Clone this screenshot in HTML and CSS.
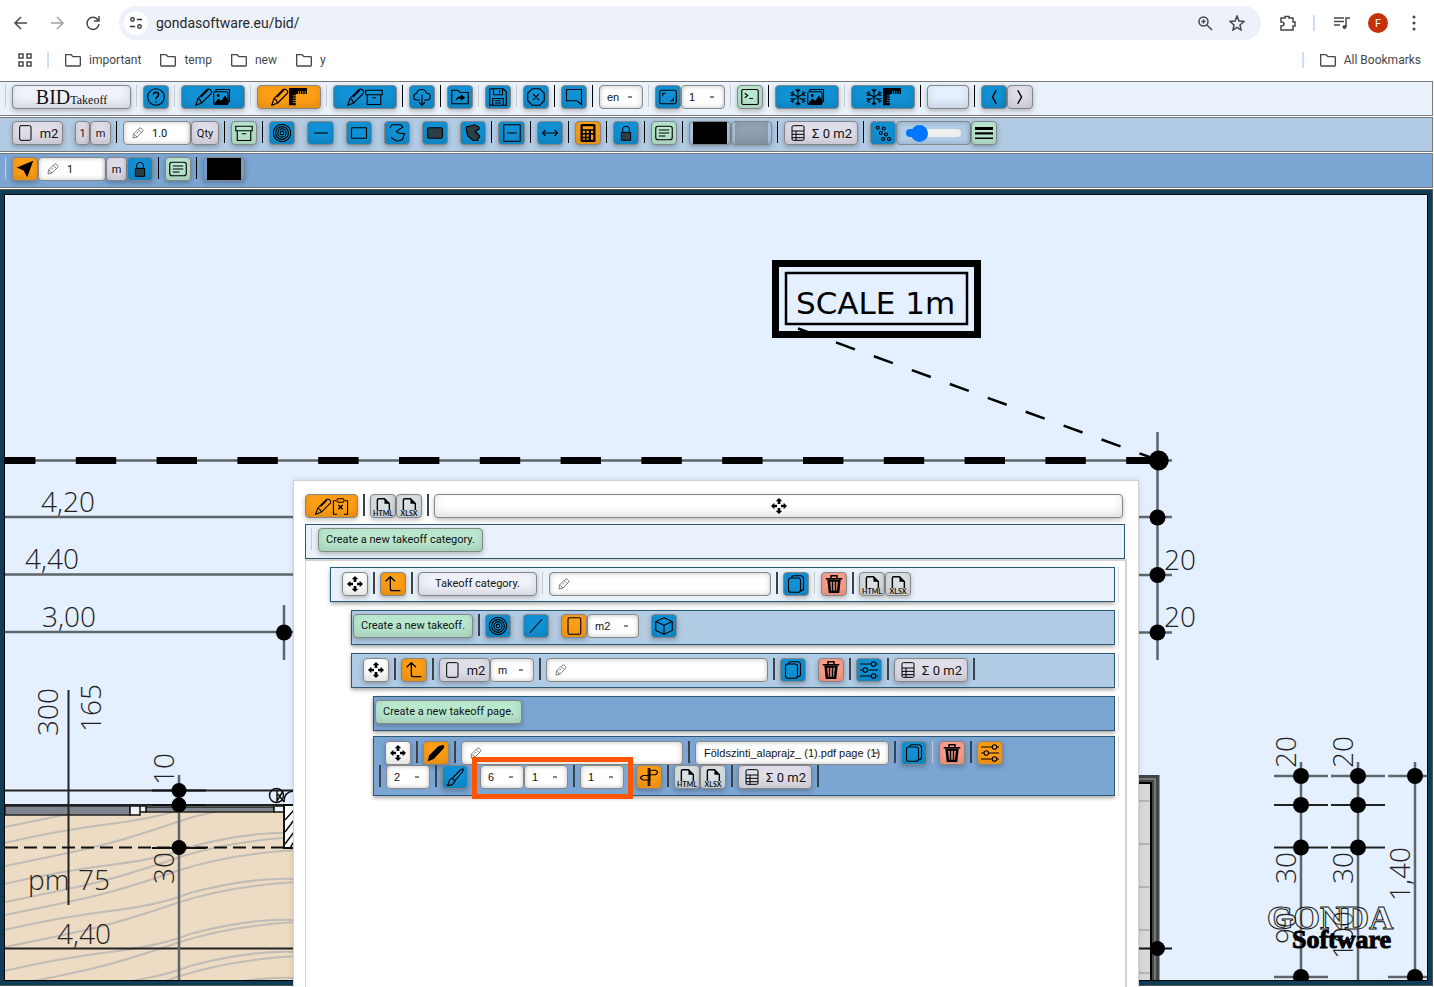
FILE: index.html
```html
<!DOCTYPE html>
<html lang="en">
<head>
<meta charset="utf-8">
<title>BID Takeoff</title>
<link rel="stylesheet" href="styles.css">
</head>
<body>
<svg class="sprite" aria-hidden="true">
  <symbol id="pen" viewBox="0 0 24 24"><path d="M1 23l3-9L16 2q2-1 4 0l2 2q1 2-1 4L9 20zM8 12l9-9M4 14q3 1 5 6"/></symbol>
  <symbol id="image" viewBox="0 0 24 24"><path d="M4 5V2h18v16h-2"/><rect x="1" y="5" width="19" height="17" rx="2"/><path class="solid" d="M2 20l5-6 4 3 5-7 4 6v6H2z"/><circle class="solid" cx="7" cy="10" r="2"/></symbol>
  <symbol id="ruler" viewBox="0 0 24 24"><path class="solid" d="M0 0h24v8h-2V4h-1v4h-2V4h-1v4h-2V4h-1v4h-2V4h-1v4H9v2H5v1h4v2H5v1h4v2H5v1h4v2H5v1h4v3H0z"/></symbol>
  <symbol id="archive" viewBox="0 0 24 24"><path d="M1 3h22v6H1zM3 9v13h18V9M9 13h6"/></symbol>
  <symbol id="help" viewBox="0 0 24 24"><circle cx="12" cy="12" r="11"/><path class="bold" d="M8.500 9q0-3.500 3.500-3.500t3.500 3.200q0 2-2 3.200-1.500 1-1.500 3M12 17.500v1.500"/></symbol>
  <symbol id="cloud" viewBox="0 0 24 24"><path d="M9 16H6q-5 0-5-4.500Q1 8 5 7q1-5 6.500-5T18 7q5 0 5 4.500T18 16h-3M12 9v14M8 19l4 4 4-4"/></symbol>
  <symbol id="share" viewBox="0 0 24 24"><path d="M1 21V3h8l3 3h11v15z"/><path class="solid" d="M6 17q1-6 7-6V8l6 5-6 4v-3q-4 0-7 3z"/></symbol>
  <symbol id="save" viewBox="0 0 24 24"><path d="M1 1h18l4 4v18H1zM6 1v8h12V1M14 3v4M5 23v-9h14v9M8 17h8M8 20h8"/></symbol>
  <symbol id="close" viewBox="0 0 24 24"><path d="M7 1h10l6 6v10l-6 6H7l-6-6V7zM8 8l8 8M16 8l-8 8"/></symbol>
  <symbol id="comment" viewBox="0 0 24 24"><path d="M22 22V2H2v15h14z"/></symbol>
  <symbol id="full" viewBox="0 0 24 24"><rect x="1" y="3" width="22" height="18" rx="2"/><path d="M5 11V7h4M19 13v4h-4"/></symbol>
  <symbol id="term" viewBox="0 0 24 24"><rect x="1" y="2" width="22" height="20" rx="2"/><path d="M5 7l4 3-4 3M11 14h5"/></symbol>
  <symbol id="snow" viewBox="0 0 24 24"><path d="M12 1v22M2 6l20 12M22 6L2 18M9 2l3 3 3-3M9 22l3-3 3 3M2 10l4-1-1-5M22 14l-4 1 1 5M22 10l-4-1 1-5M2 14l4 1-1 5"/></symbol>
  <symbol id="lt" viewBox="0 0 24 24"><path class="bold" d="M15 3l-5 9 5 9"/></symbol>
  <symbol id="gt" viewBox="0 0 24 24"><path class="bold" d="M9 3l5 9-5 9"/></symbol>
  <symbol id="page" viewBox="0 0 24 24"><rect x="4" y="1" width="17" height="22" rx="2"/></symbol>
  <symbol id="pencil" viewBox="0 0 24 24"><path d="M2 22l1-8L14 3q2-2 4-1l3 3q2 2 0 4L10 20zM3 14l7 6M12 5l7 6M9 13l3-3"/></symbol>
  <symbol id="target" viewBox="0 0 24 24"><circle cx="12" cy="12" r="11.500"/><circle cx="12" cy="12" r="8.500"/><circle cx="12" cy="12" r="5.500"/><circle cx="12" cy="12" r="2.500"/></symbol>
  <symbol id="line" viewBox="0 0 24 24"><path d="M3 12h18"/></symbol>
  <symbol id="rect" viewBox="0 0 24 24"><rect x="2" y="5" width="20" height="14" rx="1"/></symbol>
  <symbol id="rectfill" viewBox="0 0 24 24"><rect class="slate" x="2" y="5" width="20" height="14" rx="2"/></symbol>
  <symbol id="poly" viewBox="0 0 24 24"><path d="M5 1h12l3 3-9 6 3 2 8 1-3 8-7 2-8-5"/><path d="M5 1l-2 4"/></symbol>
  <symbol id="polyfill" viewBox="0 0 24 24"><path class="slate" d="M3 4l11-3 6 3v3l-5 3 2 2 4 4-3 6h-6l-7-6-2-8z"/></symbol>
  <symbol id="minus" viewBox="0 0 24 24"><rect x="1" y="1" width="22" height="22" rx="1"/><path d="M6 12h12"/></symbol>
  <symbol id="width" viewBox="0 0 24 24"><path d="M2 12h20M6 8l-4 4 4 4M18 8l4 4-4 4"/></symbol>
  <symbol id="calc" viewBox="0 0 24 24"><path class="solid" fill-rule="evenodd" d="M4 0h16q2 0 2 2v20q0 2-2 2H4q-2 0-2-2V2q0-2 2-2zM5 3v4h14V3zM5 9v3h3V9zM10 9v3h3V9zM16 9v3h3V9zM5 14v3h3v-3zM10 14v3h3v-3zM16 14v7h3v-7zM5 19v2h3v-2zM10 19v2h3v-2z"/></symbol>
  <symbol id="lock" viewBox="0 0 24 24"><path class="slate" d="M5 11h14v12H5z"/><path d="M7 11V6q0-4 5-4t5 4v5"/></symbol>
  <symbol id="card" viewBox="0 0 24 24"><rect x="1" y="3" width="22" height="18" rx="3"/><path d="M5 8h14M5 12h14M5 16h9"/></symbol>
  <symbol id="sheet" viewBox="0 0 24 24"><path d="M5 1h14q2 0 2 2v18q0 2-2 2H5q-2 0-2-2V3q0-2 2-2zM3 9h18M3 14h18M3 19h18M9 9v14"/></symbol>
  <symbol id="bubbles" viewBox="0 0 24 24"><circle cx="5" cy="5" r="2"/><circle cx="13" cy="6" r="2"/><circle cx="9" cy="12" r="2"/><circle cx="16" cy="14" r="2"/><circle cx="12" cy="20" r="2"/><circle cx="20" cy="20" r="2"/></symbol>
  <symbol id="bars" viewBox="0 0 24 24"><path class="solid" d="M0 4h24v4H0zM0 11h24v3H0zM0 18h24v2H0z"/></symbol>
  <symbol id="nav" viewBox="0 0 24 24"><path class="solid" d="M23 1L15 23l-5-9-9-4z"/></symbol>
  <symbol id="clip" viewBox="0 0 24 24"><path d="M6 4H2v19h5M17 23h5V4h-4"/><path class="bold" d="M9 16l6-6M9 10l6 6"/><rect x="7" y="1" width="10" height="5" rx="2"/></symbol>
  <symbol id="doc" viewBox="0 0 24 17"><path class="bold" d="M4 17V3q0-2 2-2h8l7 7v9"/><path class="solid" d="M14 0l8 8h-8z"/></symbol>
  <symbol id="move" viewBox="0 0 24 24"><path class="solid" d="M12 0l5 5h-3v4h-4V5H7zM12 24l5-5h-3v-4h-4v4H7zM0 12l5-5v3h4v4H5v3zM24 12l-5-5v3h-4v4h4v3z"/></symbol>
  <symbol id="turn" viewBox="0 0 24 24"><path class="bold" d="M1 8l7-7 7 7M8 1v18q0 3 3 3h12"/></symbol>
  <symbol id="copy" viewBox="0 0 24 24"><rect x="2" y="4" width="16" height="19" rx="3"/><path d="M6 4q0-3 3-3h9q4 0 4 4v13q0 3-4 3"/></symbol>
  <symbol id="trash" viewBox="0 0 24 24"><path class="bold" d="M1 5h22M8 5V1h8v4"/><path class="solid" fill-rule="evenodd" d="M3 6h18l-2 18H5zM7 9l1 12h1V9zM11 9v12h2V9zM15 9v12h1l1-12z"/></symbol>
  <symbol id="tune" viewBox="0 0 24 24"><path d="M0 4h15M21 4h3M0 12h4M10 12h14M0 20h15M21 20h3"/><circle cx="18" cy="4" r="3"/><circle cx="7" cy="12" r="3"/><circle cx="18" cy="20" r="3"/></symbol>
  <symbol id="slash" viewBox="0 0 24 24"><path d="M4 21L20 3"/></symbol>
  <symbol id="cube" viewBox="0 0 24 24"><path d="M12 1l11 5v12l-11 5-11-5V6zM1 6l11 5 11-5M12 11v12"/></symbol>
  <symbol id="marker" viewBox="0 0 24 24"><path class="solid" d="M1 23l2-8L15 3l7-2 1 4L9 20z"/></symbol>
  <symbol id="brush" viewBox="0 0 24 24"><path d="M23 1q-2 0-4 2L8 14l4 3L22 5q1-2 1-4M8 14q-4 1-4 5 0 3-3 4 9 1 11-6"/></symbol>
  <symbol id="sign" viewBox="0 0 24 24"><path d="M13 3h8l3 3-3 3h-8zM13 10H4l-4 3 4 3h9z"/><path d="M11 24V0h2v24z"/></symbol>
  <symbol id="folder" viewBox="0 0 24 24"><path d="M1 20V4h8l3 3h10q1 0 1 1v12q0 1-1 1H2q-1 0-1-1z"/></symbol>
</svg>

<header class="chrome">
  <div class="nav">
    <button class="ghost" aria-label="Back"><svg viewBox="0 0 16 16"><path d="M14 8H2M8 2L2 8l6 6"/></svg></button>
    <button class="ghost faded" aria-label="Forward"><svg viewBox="0 0 16 16"><path d="M2 8h12M8 2l6 6-6 6"/></svg></button>
    <button class="ghost" aria-label="Reload"><svg viewBox="0 0 16 16"><path d="M13 5A6 6 0 1 0 14 9M14 1v5H9"/></svg></button>
    <div class="omnibox">
      <button class="site" aria-label="Site information"><svg viewBox="0 0 16 16"><circle cx="4" cy="4" r="2"/><path d="M9 4h6M1 12h6"/><circle cx="12" cy="12" r="2"/></svg></button>
      <input class="url" aria-label="Address" value="gondasoftware.eu/bid/">
      <button class="ghost" aria-label="Zoom"><svg viewBox="0 0 16 16"><circle cx="6.500" cy="6.500" r="4.500"/><path d="M10 10l5 5M6.500 4.500v4M4.500 6.500h4"/></svg></button>
      <button class="ghost" aria-label="Bookmark"><svg viewBox="0 0 16 16"><path d="M8 1l2 5 5 .5-4 3.500 1 5-4-2.700L4 15l1-5-4-3.500L6 6z"/></svg></button>
    </div>
    <button class="ghost ext" aria-label="Extensions"><svg viewBox="0 0 16 16"><path d="M1 3h4V1.500h4V3h4v4h2v4h-2v4H1v-4q3 0 3-2T1 7z"/></svg></button>
    <span class="rule"></span>
    <button class="ghost media" aria-label="Media"><svg viewBox="0 0 16 16"><path d="M0 3h10M0 6.500h10M0 10h6M12 12V3h4"/><circle class="solid" cx="10.500" cy="12" r="2"/></svg></button>
    <button class="avatar">F</button>
    <button class="ghost" aria-label="Menu"><svg viewBox="0 0 16 16"><g class="solid"><circle cx="8" cy="2" r="1.500"/><circle cx="8" cy="8" r="1.500"/><circle cx="8" cy="14" r="1.500"/></g></svg></button>
  </div>
  <div class="marks">
    <button class="grid" aria-label="Apps"><svg viewBox="0 0 16 16"><path d="M2 2h4v4H2zM10 2h4v4h-4zM2 10h4v4H2zM10 10h4v4h-4z"/></svg></button>
    <span class="rule"></span>
    <a href="#"><svg><use href="#folder"/></svg>important</a>
    <a href="#"><svg><use href="#folder"/></svg>temp</a>
    <a href="#"><svg><use href="#folder"/></svg>new</a>
    <a href="#"><svg><use href="#folder"/></svg>y</a>
    <span class="rule push"></span>
    <a href="#"><svg><use href="#folder"/></svg>All Bookmarks</a>
  </div>
</header>

<main class="app">
  <div class="bar pale">
    <i class="sep light"></i><button class="btn ice brand"><span>BID</span><small>Takeoff</small></button>
    <i class="sep light"></i><button class="btn blue" aria-label="Help"><svg><use href="#help"/></svg></button>
    <i class="sep light"></i><button class="btn blue wide" aria-label="Edit images"><svg><use href="#pen"/></svg><svg><use href="#image"/></svg></button>
    <i class="sep light"></i><button class="btn orange wide" aria-label="Edit measures"><svg><use href="#pen"/></svg><svg><use href="#ruler"/></svg></button>
    <i class="sep light"></i><button class="btn blue wide" aria-label="Edit archive"><svg><use href="#pen"/></svg><svg><use href="#archive"/></svg></button>
    <i class="sep"></i><button class="btn blue" aria-label="Download"><svg><use href="#cloud"/></svg></button>
    <i class="sep"></i><button class="btn blue" aria-label="Open"><svg><use href="#share"/></svg></button>
    <i class="sep light"></i><button class="btn blue" aria-label="Save"><svg><use href="#save"/></svg></button>
    <i class="sep light"></i><button class="btn blue" aria-label="Close"><svg><use href="#close"/></svg></button>
    <i class="sep"></i><button class="btn blue" aria-label="Comment"><svg><use href="#comment"/></svg></button>
    <i class="sep"></i><select class="pick" aria-label="Language"><option>en</option></select>
    <i class="sep light"></i><button class="btn blue" aria-label="Fit"><svg><use href="#full"/></svg></button><select class="pick" aria-label="Zoom level"><option>1</option></select>
    <i class="sep light"></i><button class="btn green" aria-label="Console"><svg><use href="#term"/></svg></button>
    <i class="sep"></i><button class="btn blue wide" aria-label="Freeze images"><svg><use href="#snow"/></svg><svg><use href="#image"/></svg></button>
    <i class="sep light"></i><button class="btn blue wide" aria-label="Freeze measures"><svg><use href="#snow"/></svg><svg><use href="#ruler"/></svg></button>
    <i class="sep"></i><button class="btn swatch sky" aria-label="Background color"></button>
    <i class="sep"></i><button class="btn blue" aria-label="Previous"><svg><use href="#lt"/></svg></button><button class="btn lilac" aria-label="Next"><svg><use href="#gt"/></svg></button>
  </div>

  <div class="bar mid">
    <i class="sep light"></i><button class="btn lilac unit"><svg><use href="#page"/></svg>m2</button>
    <i class="sep light"></i><button class="btn lilac tiny">1</button><button class="btn lilac small">m</button>
    <i class="sep"></i><label class="field short"><svg><use href="#pencil"/></svg><input aria-label="Quantity" value="1.0"></label><button class="btn lilac qty">Qty</button>
    <i class="sep"></i><button class="btn green" aria-label="Archive"><svg><use href="#archive"/></svg></button>
    <i class="sep"></i><button class="btn blue" aria-label="Point"><svg><use href="#target"/></svg></button>
    <i class="sep light"></i><button class="btn blue draw" aria-label="Line"><svg><use href="#line"/></svg></button>
    <i class="sep light"></i><button class="btn blue" aria-label="Rectangle"><svg><use href="#rect"/></svg></button>
    <i class="sep light"></i><button class="btn blue" aria-label="Polygon"><svg><use href="#poly"/></svg></button>
    <i class="sep light"></i><button class="btn blue" aria-label="Filled rectangle"><svg><use href="#rectfill"/></svg></button>
    <i class="sep light"></i><button class="btn blue" aria-label="Filled polygon"><svg><use href="#polyfill"/></svg></button>
    <i class="sep"></i><button class="btn blue draw" aria-label="Subtract"><svg><use href="#minus"/></svg></button>
    <i class="sep"></i><button class="btn blue" aria-label="Width"><svg><use href="#width"/></svg></button>
    <i class="sep"></i><button class="btn orange" aria-label="Calculator"><svg><use href="#calc"/></svg></button>
    <i class="sep"></i><button class="btn blue" aria-label="Lock"><svg class="s16"><use href="#lock"/></svg></button>
    <i class="sep"></i><button class="btn green" aria-label="Note"><svg><use href="#card"/></svg></button>
    <i class="sep"></i><button class="btn swatch black" aria-label="Line color"></button><button class="btn swatch steel" aria-label="Fill color"></button>
    <i class="sep"></i><button class="btn lilac sum"><svg><use href="#sheet"/></svg>Σ 0 m2</button>
    <i class="sep"></i><button class="btn blue" aria-label="Opacity"><svg><use href="#bubbles"/></svg></button><span class="slide"><input type="range" aria-label="Opacity level" value="14"></span><button class="btn green" aria-label="Line weight"><svg><use href="#bars"/></svg></button>
  </div>

  <div class="bar deep">
    <i class="sep light"></i><button class="btn orange" aria-label="Pointer"><svg><use href="#nav"/></svg></button><label class="field short"><svg><use href="#pencil"/></svg><input aria-label="Scale" value="1"></label><button class="btn lilac small">m</button><button class="btn blue" aria-label="Lock scale"><svg class="s16"><use href="#lock"/></svg></button>
    <i class="sep"></i><button class="btn green" aria-label="Note"><svg><use href="#card"/></svg></button>
    <i class="sep"></i><button class="btn swatch black" aria-label="Scale color"></button>
  </div>

  <section class="canvas">
    <svg class="plan" role="img" aria-label="Floor plan">
      <defs>
        <clipPath id="floor"><path d="M5 812H293V980H5z"/></clipPath>
        <path id="vein" d="M0 0Q50 -10 86 -18T180 -46Q230 -62 296 -66"/>
        <path id="knot" d="M0 0Q60 -14 110 -20T190 -38Q250 -54 296 -52"/>
      </defs>
      <g transform="translate(-5 -195)">
        <path class="dim" d="M5 460.500H1172M5 517H293M5 574.500H293M5 632H293M284 605V660M1157.500 432V660M1139 517H1172M1139 575H1172M1139 632.500H1172"/>
        <path d="M-5 460.500H1158" stroke="#000" stroke-width="7" stroke-dasharray="40.400 40.400"/>
        <circle cx="1158.700" cy="460.500" r="10"/>
        <g><circle cx="284" cy="632.500" r="8"/><circle cx="1157.500" cy="517.500" r="8"/><circle cx="1157.500" cy="575" r="8"/><circle cx="1157.500" cy="632.500" r="8"/></g>
        <path d="M798 328.500L1155 459" stroke="#000" stroke-width="2.500" stroke-dasharray="20.200 20.200"/>
        <rect x="775.500" y="263.500" width="202" height="71" fill="none" stroke="#000" stroke-width="7"/>
        <rect x="786" y="273" width="181" height="51" fill="none" stroke="#000" stroke-width="2.500"/>
        <text class="scale" x="796" y="314">SCALE 1m</text>

        <path d="M5 812H293V980H5z" fill="#eddcc3"/>
        <g clip-path="url(#floor)"><g class="grain">
          <use href="#vein" x="0" y="828"/><use href="#knot" x="0" y="844"/><use href="#vein" x="0" y="867"/><use href="#knot" x="0" y="885"/><use href="#vein" x="0" y="903"/><use href="#vein" x="0" y="916"/><use href="#knot" x="0" y="931"/><use href="#vein" x="0" y="948"/><use href="#knot" x="0" y="972"/><use href="#vein" x="0" y="988"/><use href="#knot" x="0" y="1004"/><use href="#vein" x="0" y="1022"/><use href="#knot" x="0" y="1030"/>
        </g></g>
        <path d="M5 806H130V815H5zM146 807H274V812H146z" fill="#80868e" stroke="#222"/>
        <path d="M130 806h10v9h-10zM140 806h6v6h-6zM274 806h10v6h-10z" fill="#eef3fa" stroke="#111" stroke-width="1.500"/>
        <path d="M5 790.500H293M5 805H293M68.500 690V905M5 948.500H293" stroke="#222" stroke-width="2"/>
        <path class="dim" d="M179 775V980"/>
        <path d="M152 790.500H206M152 805H206M152 848H206" stroke="#111" stroke-width="2"/>
        <path d="M5 847.500H286" stroke="#111" stroke-width="2" stroke-dasharray="13 6"/>
        <g><circle cx="179" cy="790.500" r="7.500"/><circle cx="179" cy="805" r="7.500"/><circle cx="179" cy="847.500" r="7.500"/></g>
        <path d="M284 805V848H295V805z" fill="#fff" stroke="#111" stroke-width="2"/>
        <path d="M285 820l9-10M285 832l9-12M285 844l9-12M290 848l5-8" stroke="#111"/>
        <circle cx="276.500" cy="795.500" r="7" fill="none" stroke="#111" stroke-width="1.500"/>
        <path d="M277 790v11l6-10M278 794l6 8M284 802q0-10 9-11" fill="none" stroke="#111"/>

        <path d="M1137 775H1159.500V982H1137z" fill="#444"/>
        <path d="M1137 779H1155V982" fill="none" stroke="#777" stroke-width="2"/>
        <path d="M1137 784H1151V982H1137z" fill="#d9d9d9"/>
        <path d="M1137 801H1151M1137 844H1151M1137 887H1151M1137 930H1151M1137 973H1151" stroke="#b5b5b5" stroke-width="2"/>
        <path d="M1137 783H1151V982" fill="none" stroke="#000" stroke-width="2"/>
        <path d="M1139 948.500H1172" stroke="#111" stroke-width="2"/>
        <circle cx="1157.500" cy="948.500" r="7.500"/>

        <path class="dim" d="M1301 762V980M1358 762V980M1415 762V980M1274 776H1328M1331 776H1385M1388 776H1430M1274 977H1328M1388 977H1430"/>
        <path d="M1274 805H1328M1331 805H1385M1274 847.500H1328M1331 847.500H1385" stroke="#222" stroke-width="2"/>
        <g><circle cx="1301" cy="776" r="8"/><circle cx="1301" cy="805" r="8"/><circle cx="1301" cy="847.500" r="8"/><circle cx="1301" cy="977" r="8"/><circle cx="1358" cy="776" r="8"/><circle cx="1358" cy="805" r="8"/><circle cx="1358" cy="847.500" r="8"/><circle cx="1415" cy="776" r="8"/><circle cx="1415" cy="977" r="8"/></g>

        <g class="measure">
          <text x="41" y="512">4,20</text><text x="25" y="569">4,40</text><text x="42" y="627">3,00</text>
          <text x="1164" y="570">20</text><text x="1164" y="627">20</text>
          <text x="28" y="890">pm</text><text x="78" y="890">75</text><text x="57" y="944">4,40</text>
          <text transform="translate(58 736) rotate(-90)">300</text>
          <text transform="translate(101 732) rotate(-90)">165</text>
          <text transform="translate(174 785) rotate(-90)">10</text>
          <text transform="translate(174 884) rotate(-90)">30</text>
          <text transform="translate(1296 768) rotate(-90)">20</text>
          <text transform="translate(1353 768) rotate(-90)">20</text>
          <text transform="translate(1296 884) rotate(-90)">30</text>
          <text transform="translate(1353 884) rotate(-90)">30</text>
          <text transform="translate(1410 901) rotate(-90)">1,40</text>
          <text transform="translate(1296 944) rotate(-90)">90</text>
          <text transform="translate(1353 959) rotate(-90)">100</text>
        </g>
        <text class="gonda" x="1267" y="929">GONDA</text>
        <text class="soft" x="1292" y="948">Software</text>
      </g>
    </svg>
  </section>

  <section class="panel">
    <div class="row head">
      <button class="btn orange pair" aria-label="Edit takeoffs"><svg><use href="#pen"/></svg><svg><use href="#clip"/></svg></button>
      <i class="sep dark"></i><button class="btn file"><svg><use href="#doc"/></svg><b>HTML</b></button><button class="btn file"><svg><use href="#doc"/></svg><b>XLSX</b></button>
      <i class="sep dark"></i><button class="btn white grow" aria-label="Move panel"><svg class="s16"><use href="#move"/></svg></button>
    </div>
    <div class="row box pale top"><i class="sep light"></i><button class="btn green text">Create a new takeoff category.</button></div>
    <div class="list">
      <div class="row box pale lvl1">
        <button class="btn white" aria-label="Move"><svg class="s16"><use href="#move"/></svg></button>
        <i class="sep dark"></i><button class="btn orange" aria-label="Up"><svg class="s16"><use href="#turn"/></svg></button>
        <i class="sep dark"></i><button class="btn ice text cat">Takeoff category.</button>
        <i class="sep light"></i><label class="field"><svg><use href="#pencil"/></svg><input aria-label="Category name"></label>
        <i class="sep dark"></i><button class="btn blue" aria-label="Copy"><svg><use href="#copy"/></svg></button>
        <i class="sep light"></i><button class="btn red" aria-label="Delete"><svg><use href="#trash"/></svg></button>
        <i class="sep dark"></i><button class="btn file"><svg><use href="#doc"/></svg><b>HTML</b></button><button class="btn file"><svg><use href="#doc"/></svg><b>XLSX</b></button>
      </div>
      <div class="row box mid lvl2 tight">
        <button class="btn green text">Create a new takeoff.</button>
        <i class="sep dark"></i><button class="btn blue" aria-label="Point"><svg><use href="#target"/></svg></button>
        <i class="sep light"></i><button class="btn blue" aria-label="Line"><svg><use href="#slash"/></svg></button>
        <i class="sep light"></i><button class="btn orange" aria-label="Area"><svg><use href="#page"/></svg></button><select class="pick area" aria-label="Area unit"><option>m2</option></select>
        <i class="sep light"></i><button class="btn blue" aria-label="Volume"><svg><use href="#cube"/></svg></button>
      </div>
      <div class="row box mid lvl2">
        <button class="btn white" aria-label="Move"><svg class="s16"><use href="#move"/></svg></button>
        <i class="sep dark"></i><button class="btn orange" aria-label="Up"><svg class="s16"><use href="#turn"/></svg></button>
        <i class="sep dark"></i><button class="btn lilac unit"><svg><use href="#page"/></svg>m2</button><select class="pick" aria-label="Unit"><option>m</option></select>
        <i class="sep dark"></i><label class="field"><svg><use href="#pencil"/></svg><input aria-label="Takeoff name"></label>
        <i class="sep dark"></i><button class="btn blue" aria-label="Copy"><svg><use href="#copy"/></svg></button>
        <i class="sep light"></i><button class="btn red" aria-label="Delete"><svg><use href="#trash"/></svg></button>
        <i class="sep dark"></i><button class="btn blue" aria-label="Settings"><svg><use href="#tune"/></svg></button>
        <i class="sep dark"></i><button class="btn lilac sum"><svg><use href="#sheet"/></svg>Σ 0 m2</button><i class="sep dark"></i>
      </div>
      <div class="row box deep lvl3 tight"><button class="btn green text">Create a new takeoff page.</button></div>
      <div class="box deep lvl3 double">
        <div class="row inset">
          <button class="btn white" aria-label="Move"><svg class="s16"><use href="#move"/></svg></button>
          <i class="sep dark"></i><button class="btn orange" aria-label="Draw"><svg><use href="#marker"/></svg></button>
          <i class="sep dark"></i><label class="field"><svg><use href="#pencil"/></svg><input aria-label="Page name"></label>
          <i class="sep dark"></i><select class="pick pdf" aria-label="Source page"><option>Földszinti_alaprajz_ (1).pdf page (1)</option></select>
          <i class="sep dark"></i><button class="btn blue" aria-label="Copy"><svg><use href="#copy"/></svg></button>
          <i class="sep light"></i><button class="btn red" aria-label="Delete"><svg><use href="#trash"/></svg></button>
          <i class="sep dark"></i><button class="btn orange" aria-label="Settings"><svg><use href="#tune"/></svg></button>
        </div>
        <div class="row">
          <i class="sep dark"></i><select class="pick" aria-label="Line width"><option>2</option></select>
          <i class="sep dark"></i><button class="btn blue" aria-label="Brush"><svg><use href="#brush"/></svg></button>
          <div class="marked"><select class="pick" aria-label="Dash length"><option>6</option></select><select class="pick" aria-label="Dash gap"><option>1</option></select><i class="sep dark"></i><select class="pick" aria-label="Dash style"><option>1</option></select></div>
          <button class="btn orange" aria-label="Direction"><svg><use href="#sign"/></svg></button>
          <i class="sep dark"></i><button class="btn file"><svg><use href="#doc"/></svg><b>HTML</b></button><button class="btn file"><svg><use href="#doc"/></svg><b>XLSX</b></button>
          <i class="sep dark"></i><button class="btn lilac sum"><svg><use href="#sheet"/></svg>Σ 0 m2</button><i class="sep dark"></i>
        </div>
      </div>
    </div>
  </section>
</main>
</body>
</html>
```
FILE: styles.css
```css
* { box-sizing: border-box; }
html, body { height: 100%; }
body {
  margin: 0;
  display: flex;
  flex-direction: column;
  overflow: hidden;
  background: #fff;
  font-family: Roboto, "Liberation Sans", sans-serif;
  font-size: 12px;
  color: #111;
}
button, input, select { font: inherit; color: inherit; margin: 0; }
svg { fill: none; stroke: #000; stroke-width: 1.5; flex: none; }
.sprite { position: absolute; width: 0; height: 0; }
.solid { fill: #000; stroke: none; }
.slate { fill: #2b3d45; }
.bold { stroke-width: 2; }

/* browser chrome */
.chrome { height: 81px; flex: none; }
.nav { display: flex; align-items: center; height: 46px; padding: 0 11px 0 12px; }
.ghost, .site, .grid, .avatar { border: 0; background: none; padding: 0; }
.ghost { width: 18px; height: 18px; margin-right: 18px; display: grid; place-items: center; }
.ghost svg { width: 16px; height: 16px; stroke: #45474a; }
.chrome .solid { fill: #45474a; stroke: none; }
.faded { opacity: .5; }
.omnibox {
  flex: 1;
  display: flex;
  align-items: center;
  height: 34px;
  padding: 0 15px 0 5px;
  margin-left: -1px;
  border-radius: 17px;
  background: #edf1fa;
}
.omnibox .ghost { margin: 0 0 0 14px; }
.site { width: 24px; height: 24px; border-radius: 50%; background: #fff; display: grid; place-items: center; }
.site svg { width: 14px; height: 14px; stroke: #333; }
.url { flex: 1; min-width: 0; border: 0; padding: 0 0 0 8px; background: none; font-size: 14px; color: #26282b; outline: 0; }
.nav .ext { margin: 0 16px 0 18px; }
.rule { width: 2px; height: 16px; background: #cfdffb; }
.nav .media { margin: 0 17px 0 18px; }
.avatar { width: 20px; height: 20px; border-radius: 50%; background: #c5320a; color: #fff; font-size: 11px; margin-right: 17px; }
.nav > .ghost:last-child { margin: 0; }
.marks { display: flex; align-items: center; height: 28px; padding: 0 13px 0 17px; }
.grid { width: 16px; height: 16px; }
.grid svg { width: 16px; height: 16px; stroke: #45474a; }
.marks .rule { margin: 0 16px 0 14px; }
.marks .push { margin-left: auto; }
.marks a { display: flex; align-items: center; gap: 8px; margin-right: 19px; color: #45474a; text-decoration: none; }
.marks a:last-child { margin-right: 0; }
.marks a svg { width: 16px; height: 16px; stroke: #45474a; stroke-width: 2; }

/* application toolbars */
.app { flex: 1; min-height: 0; display: flex; flex-direction: column; gap: 1px; position: relative; }
.bar {
  display: flex;
  flex: none;
  height: 35px;
  margin-right: 1px;
  padding-top: 3px;
  border: 1px solid #777;
  border-left: 0;
}
.pale { background: #e9f1fa; }
.mid { background: #b1cbe5; }
.deep { background: #7ba5d3; }
.sep { flex: none; width: 1px; height: 22px; margin: 0 6px 0 5px; background: #000; }
.sep.light { background: #c5cbd1; }
.sep.dark { width: 2px; margin-right: 5px; background: #3a4148; }
.btn, .field, .pick, .slide {
  flex: none;
  height: 24px;
  border: 1px solid #868686;
  border-radius: 4px;
}
.btn {
  display: flex;
  align-items: center;
  justify-content: center;
  width: 26px;
  padding: 0;
  box-shadow: 0 2px 5px rgba(0, 0, 0, .25), inset 0 -4px 8px rgba(0, 0, 0, .12);
}
.btn svg { width: 18px; height: 18px; }
.btn .s16 { width: 16px; height: 16px; }
.blue { background: #1192d6; }
.orange { background: #ff9f16; }
.green { background: #b9e8cf; }
.lilac { background: #e0dee9; }
.ice { background: #eff2fa; }
.red { background: #fe9f8a; }
.white { background: #fff; }
.draw { width: 27px; }
.wide { width: 64px; }
.pair { width: 53px; }
.pair svg { width: 17px; height: 17px; }
.brand { width: 119px; align-items: baseline; font-family: "Liberation Serif", serif; font-size: 20px; line-height: 22px; }
.brand small { font-size: 12px; }
.unit { width: 51px; gap: 7px; font-size: 13px; }
.sum { width: 74px; gap: 6px; font-size: 13px; }
.unit svg, .sum svg { width: 16px; }
.tiny { width: 15px; font-size: 11px; }
.small { width: 21px; font-size: 11px; }
.qty { width: 28px; font-size: 11px; }
.text { width: auto; padding: 0 7px 2px; font-size: 11px; }
.cat { width: 119px; }
.grow { flex: 1; }
.swatch { width: 42px; background: transparent content-box; padding: 0 3px; }
.swatch.black { background-color: #000; }
.swatch.steel { width: 41px; background-color: #909fb1; }
.swatch.sky { background-color: #e4f0ff; }
.file { flex-direction: column; justify-content: flex-start; background: #dae1e5; font-size: 7px; line-height: 7px; padding-top: 3px; }
.btn.file svg { width: 18px; height: 12px; }
.file b { font-family: Lato, sans-serif; }
.field { display: flex; align-items: center; width: 222px; padding-left: 8px; background: #fff; box-shadow: inset 0 0 5px rgba(0, 0, 0, .25); }
.field.short { width: 68px; }
.field svg { width: 12px; height: 12px; stroke: #555; }
.field input { flex: 1; min-width: 0; width: 20px; padding: 0 0 0 8px; border: 0; background: none; outline: 0; font-size: 11px; }
.pick {
  appearance: none;
  width: 44px;
  padding: 0 0 0 7px;
  font-family: "Liberation Sans", sans-serif;
  font-size: 11px;
  background: #fff linear-gradient(#888, #888) no-repeat right 10px center / 4px 2px;
  box-shadow: inset 0 0 5px rgba(0, 0, 0, .25);
}
.area { width: 52px; }
.pdf { width: 194px; padding-left: 8px; }
.slide { width: 75px; padding: 0 9px; display: flex; align-items: center; box-shadow: inset 0 0 5px rgba(0, 0, 0, .2); }
.slide input {
  appearance: none;
  width: 100%;
  height: 8px;
  border-radius: 4px;
  background: linear-gradient(90deg, #0075ff 20%, #efefef 20%);
}
.slide input::-webkit-slider-thumb { appearance: none; width: 17px; height: 17px; border-radius: 50%; background: #0075ff; }

/* drawing area */
.canvas { flex: 1; min-height: 0; margin: 0 1px 1px 0; border: 1px solid #555; border-left: 0; padding: 5px; background: #0f3d57; }
.plan { display: block; width: 100%; height: 100%; outline: 1px solid #000; background: #e4f0ff; }
.plan circle { fill: #000; stroke: none; }
.plan circle[fill="none"] { fill: none; stroke: #111; }
.plan text { stroke: none; fill: #000; }
.plan g > path:not([stroke]):not(.dim) { stroke: none; }
.grain { stroke: #c0bcb7; stroke-width: 2; }
.plan .dim { stroke: #5f656b; stroke-width: 2.5; }
.plan .scale { font: 31px "DejaVu Sans", sans-serif; }
.plan .measure text { font: 300 28px "Open Sans", "Noto Sans", sans-serif; fill: #222; }
.plan .gonda { font: bold 34px "Liberation Serif", serif; fill: rgba(255, 255, 255, .3); stroke: #111; stroke-width: 1; }
.plan .soft { font: bold 26px "Liberation Serif", serif; stroke: #000; stroke-width: 1; }

/* takeoff panel */
.panel {
  position: absolute;
  top: 399px;
  right: 295px;
  bottom: 0;
  left: 293px;
  display: flex;
  flex-direction: column;
  padding: 13px 11px 0;
  border: 1px solid #d2d2d2;
  border-bottom: 0;
  background: #fff;
  box-shadow: 0 0 6px rgba(0, 0, 0, .12);
}
.row { display: flex; align-items: flex-start; }
.head { padding-right: 4px; }
.box { border: 1px solid #2b5873; box-shadow: 3px 0 0 #fff, 4px 0 0 #d5d5d5, 0 2px 4px rgba(0, 0, 0, .35); }
.row.box { height: 35px; padding: 4px 0 0 11px; }
.row.top { height: 35px; margin: 6px 2px 0 0; padding: 3px 0 0; box-shadow: none; }
.list { flex: 1; display: flex; flex-direction: column; gap: 8px; padding: 6px 10px 0 24px; border: 2px solid #d2d2d2; border-width: 2px 2px 0 1px; }
.lvl2 { margin-left: 21px; }
.lvl3 { margin-left: 43px; }
.row.tight { padding: 3px 0 0 1px; }
.double { padding: 4px 0 6px; margin-top: -3px; }
.inset { padding-left: 11px; }
.marked { position: relative; display: flex; margin: 0 12px; }
.marked::after { content: ""; position: absolute; inset: -8px -9px -10px -8px; border: 5px solid #ff5500; }
```
